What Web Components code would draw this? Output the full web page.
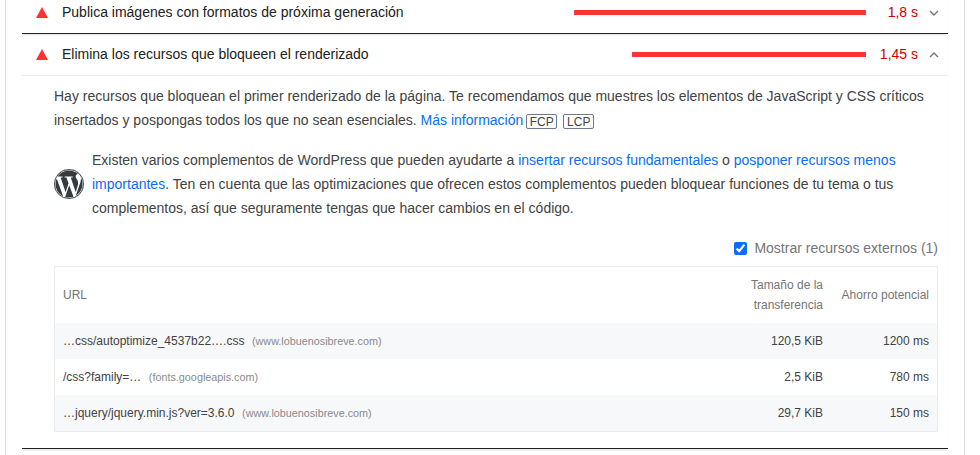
<!DOCTYPE html>
<html lang="es">
<head>
<meta charset="utf-8">
<title>Oportunidades</title>
<style>
  html, body { margin: 0; background: #fff; height: 455px; overflow: hidden; }
  body { font: 14px/24px "Liberation Sans", Arial, sans-serif; color: #212121; }
  a { color: #0b6cf7; text-decoration: none; }
</style>
</head>
<body>

<audit-card>
  <audit-row title="Publica imágenes con formatos de próxima generación" value="1,8 s" bar="292"></audit-row>
  <audit-row title="Elimina los recursos que bloqueen el renderizado" value="1,45 s" bar="234" open>
    <audit-desc>
      Hay recursos que bloquean el primer renderizado de la página. Te recomendamos que muestres los elementos de JavaScript y CSS críticos insertados y pospongas todos los que no sean esenciales. <a href="#">Más información</a><metric-chip>FCP</metric-chip><metric-chip>LCP</metric-chip>
    </audit-desc>
    <plugin-note>
      Existen varios complementos de WordPress que pueden ayudarte a <a href="#">insertar recursos fundamentales</a> o <a href="#">posponer recursos menos importantes</a>. Ten en cuenta que las optimizaciones que ofrecen estos complementos pueden bloquear funciones de tu tema o tus complementos, así que seguramente tengas que hacer cambios en el código.
    </plugin-note>
    <third-party-toggle count="1"></third-party-toggle>
    <res-table>
      <res-row url="…css/autoptimize_4537b22….css" host="(www.lobuenosibreve.com)" size="120,5 KiB" saving="1200 ms"></res-row>
      <res-row url="/css?family=…" host="(fonts.googleapis.com)" size="2,5 KiB" saving="780 ms"></res-row>
      <res-row url="…jquery/jquery.min.js?ver=3.6.0" host="(www.lobuenosibreve.com)" size="29,7 KiB" saving="150 ms"></res-row>
    </res-table>
  </audit-row>
</audit-card>

<script>
// marco de la tarjeta, recortado arriba como en la captura
class AuditCard extends HTMLElement {
  constructor() {
    super();
    this.attachShadow({ mode: 'open' });
    this.shadowRoot.innerHTML = `<style>
      :host {
        display: block;
        box-sizing: border-box;
        width: 960px;
        height: 463px;
        margin: -8px 0 0 5px;
        padding: 0 16px;
        border-left: 1px solid #e0e0e0;
        border-right: 1px solid #e0e0e0;
      }
    </style><slot></slot>`;
  }
}

class AuditRow extends HTMLElement {
  constructor() {
    super();
    this.attachShadow({ mode: 'open' });
  }

  connectedCallback() {
    const open = this.hasAttribute('open');
    const chevron = open ? 'M1 6 L5 2 L9 6' : 'M1 2 L5 6 L9 2';
    this.shadowRoot.innerHTML = `<style>
      :host {
        display: block;
        border-bottom: 1px solid #212121;
        box-shadow: 0 2px 2px -1px rgba(0, 0, 0, 0.12);
      }
      .head {
        display: flex;
        align-items: center;
        box-sizing: border-box;
        height: 41px;
        padding: 0 9px 2px 14px;
      }
      :host([open]) .head { height: 42px; border-bottom: 1px solid #ebebeb; }
      .icon { width: 12px; height: 11px; margin: 2px 14px 0 0; flex: none; }
      .title { flex: 1; white-space: nowrap; }
      .bar { height: 5px; margin-top: 2px; background: #ff3333; flex: none; }
      .value { width: 52px; flex: none; text-align: right; color: #c00; }
      .chevron { width: 10px; height: 8px; margin: 2px 0 0 11px; flex: none; }
      .body { padding: 8px 10px 16px 32px; }
    </style>
    <div class="head">
      <svg class="icon" viewBox="0 0 12 11"><polygon points="6,0 12,11 0,11" fill="#ff3333"/></svg>
      <span class="title">${this.getAttribute('title')}</span>
      <span class="bar" style="width:${this.getAttribute('bar')}px"></span>
      <span class="value">${this.getAttribute('value')}</span>
      <svg class="chevron" viewBox="0 0 10 8"><path d="${chevron}" fill="none" stroke="#757575" stroke-width="1.4"/></svg>
    </div>
    ${open ? '<div class="body"><slot></slot></div>' : ''}`;
  }
}

class AuditDesc extends HTMLElement {
  constructor() {
    super();
    this.attachShadow({ mode: 'open' });
    this.shadowRoot.innerHTML = `<style>
      :host { display: block; color: #424242; }
    </style><slot></slot>`;
  }
}

class MetricChip extends HTMLElement {
  constructor() {
    super();
    this.attachShadow({ mode: 'open' });
    this.shadowRoot.innerHTML = `<style>
      :host {
        display: inline-block;
        box-sizing: border-box;
        width: 31px;
        height: 15px;
        margin-left: 3px;
        margin-right: 3px;
        border: 1px solid #6b7a8c;
        border-radius: 2px;
        font-size: 12px;
        line-height: 14px;
        text-align: center;
        color: #424242;
        vertical-align: -1px;
      }
    </style><slot></slot>`;
  }
}

class PluginNote extends HTMLElement {
  constructor() {
    super();
    this.attachShadow({ mode: 'open' });
    this.shadowRoot.innerHTML = `<style>
      :host {
        display: flex;
        align-items: center;
        gap: 8px;
        margin-top: 16px;
        color: #424242;
      }
      svg { width: 30px; height: 30px; flex: none; }
    </style>
    <svg viewBox="0 0 24 24">
      <circle cx="12" cy="12" r="12" fill="#333a40"/>
      <path fill="#fff" d="M21.469 6.825c.84 1.537 1.318 3.3 1.318 5.175 0 3.979-2.156 7.456-5.363 9.325l3.295-9.527c.615-1.54.82-2.771.82-3.864 0-.405-.026-.78-.07-1.11m-7.981.105c.647-.03 1.232-.105 1.232-.105.582-.075.514-.93-.067-.899 0 0-1.755.135-2.88.135-1.064 0-2.85-.15-2.85-.15-.585-.03-.661.855-.075.885 0 0 .54.061 1.125.09l1.68 4.605-2.37 7.08L5.354 6.9c.649-.03 1.234-.1 1.234-.1.585-.075.516-.93-.065-.896 0 0-1.746.138-2.874.138-.2 0-.438-.008-.69-.015C4.911 3.15 8.235 1.215 12 1.215c2.809 0 5.365 1.072 7.286 2.833-.046-.003-.091-.009-.141-.009-1.06 0-1.812.923-1.812 1.914 0 .89.513 1.643 1.06 2.531.411.72.89 1.643.89 2.977 0 .915-.354 1.994-.821 3.479l-1.075 3.585-3.9-11.61.001.014zM12 22.784c-1.059 0-2.081-.153-3.048-.437l3.237-9.406 3.315 9.087c.024.053.05.101.078.149-1.12.393-2.325.609-3.582.609M1.211 12c0-1.564.336-3.05.935-4.39L7.29 21.709C3.694 19.96 1.212 16.271 1.211 12M12 0C5.385 0 0 5.385 0 12s5.385 12 12 12 12-5.385 12-12S18.615 0 12 0"/>
      <circle cx="12" cy="12" r="11.6" fill="none" stroke="#333a40" stroke-width=".7"/>
    </svg>
    <div><slot></slot></div>`;
  }
}

class ThirdPartyToggle extends HTMLElement {
  constructor() {
    super();
    this.attachShadow({ mode: 'open' });
  }

  connectedCallback() {
    this.shadowRoot.innerHTML = `<style>
      :host {
        display: flex;
        justify-content: flex-end;
        align-items: center;
        gap: 7px;
        margin-top: 16px;
        height: 24px;
        color: #757575;
      }
      input { width: 13px; height: 13px; margin: 0; accent-color: #0b6cf7; }
    </style>
    <input type="checkbox" checked>
    <span>Mostrar recursos externos (${this.getAttribute('count')})</span>`;
  }
}

class ResTable extends HTMLElement {
  constructor() {
    super();
    this.attachShadow({ mode: 'open' });
    this.shadowRoot.innerHTML = `<style>
      :host {
        display: block;
        margin-top: 6px;
        border: 1px solid #ebebeb;
        font-size: 12px;
        line-height: 20px;
      }
      .head {
        display: grid;
        grid-template-columns: 1fr 100px 106px;
        align-items: center;
        height: 56px;
        color: #757575;
      }
      .url { padding-left: 8px; }
      .num { text-align: right; padding-right: 8px; }
      ::slotted(res-row:nth-of-type(odd)) { background: #f7f8fa; }
    </style>
    <div class="head">
      <div class="url">URL</div>
      <div class="num">Tamaño de la transferencia</div>
      <div class="num">Ahorro potencial</div>
    </div>
    <slot></slot>`;
  }
}

class ResRow extends HTMLElement {
  constructor() {
    super();
    this.attachShadow({ mode: 'open' });
  }

  connectedCallback() {
    this.shadowRoot.innerHTML = `<style>
      :host {
        display: grid;
        grid-template-columns: 1fr 100px 106px;
        align-items: center;
        height: 36px;
        color: #424242;
      }
      .url { padding-left: 8px; white-space: nowrap; }
      .host { margin-left: 7.5px; font-size: 10.8px; color: #8a8a8a; }
      .num { text-align: right; padding-right: 8px; }
    </style>
    <div class="url">${this.getAttribute('url')}<span class="host">${this.getAttribute('host')}</span></div>
    <div class="num">${this.getAttribute('size')}</div>
    <div class="num">${this.getAttribute('saving')}</div>`;
  }
}

customElements.define('audit-card', AuditCard);
customElements.define('audit-row', AuditRow);
customElements.define('audit-desc', AuditDesc);
customElements.define('metric-chip', MetricChip);
customElements.define('plugin-note', PluginNote);
customElements.define('third-party-toggle', ThirdPartyToggle);
customElements.define('res-table', ResTable);
customElements.define('res-row', ResRow);
</script>
</body>
</html>
